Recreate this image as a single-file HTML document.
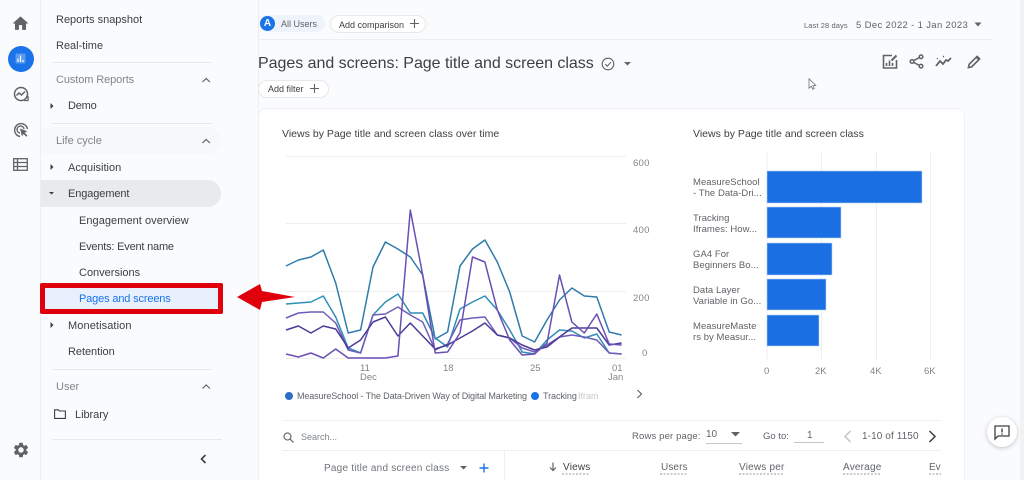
<!DOCTYPE html>
<html><head><meta charset="utf-8">
<style>
html,body{margin:0;padding:0;width:1024px;height:480px;overflow:hidden;background:#fafbfd}
body{position:relative;font-family:"Liberation Sans",sans-serif;color:#3c4043;filter:blur(.35px)}
.t{position:absolute;white-space:nowrap;line-height:14px;font-size:11px;letter-spacing:0}
.g{color:#80868b}
.b{position:absolute}
svg{position:absolute;overflow:visible}
.h{position:absolute;height:1px;background:#e6e8eb}
</style></head><body>

<!-- rail + sidebar -->
<div class="b" style="left:40px;top:0;width:1px;height:480px;background:#eceef1"></div>
<div class="b" style="left:258px;top:0;width:1px;height:480px;background:#eceef1"></div>
<div class="b" style="left:1020px;top:0;width:4px;height:480px;background:#f1f2f4"></div>

<svg style="left:11px;top:14px" width="19" height="19" viewBox="0 0 24 24"><path fill="#5f6368" d="M10 20v-6h4v6h5v-8h3L12 3 2 12h3v8z"/></svg>
<div class="b" style="left:7.500px;top:45.500px;width:26px;height:26px;border-radius:50%;background:#1a73e8"></div>
<svg style="left:15px;top:53px" width="11" height="11" viewBox="0 0 11 11"><rect x=".5" y=".5" width="10" height="10" rx="1" fill="#5b9bef"/><path d="M3 5.500v3.500M5.500 2.500V9M8 7v2" stroke="#fff" stroke-width="1.200"/></svg>
<svg style="left:13px;top:86px" width="16" height="16" viewBox="0 0 16 16" fill="none" stroke="#5f6368" stroke-width="1.500"><circle cx="8" cy="8" r="6.500"/><path d="M3.500 9.500 6 7l2.500 2L12 5.500"/><path d="M11 14.500h4V10" stroke-width="1.300"/></svg>
<svg style="left:13px;top:122px" width="16" height="16" viewBox="0 0 16 16" fill="none" stroke="#5f6368" stroke-width="1.400"><path d="M7 14.500A6.500 6.500 0 1 1 14.500 7"/><path d="M7 11a3.500 3.500 0 1 1 4-4"/><path fill="#5f6368" stroke="none" d="M7 6.500l2 8 1.500-2.500 2.800 2.800 1.200-1.200-2.800-2.800 2.500-1.500z"/></svg>
<svg style="left:13px;top:158px" width="15" height="13" viewBox="0 0 15 13" fill="none" stroke="#5f6368" stroke-width="1.300"><rect x=".7" y=".7" width="13.600" height="11.600"/><path d="M.7 4.500h13.600M.7 8.500h13.600M4.500 .7v11.600"/></svg>
<svg style="left:11.500px;top:441px" width="18" height="18" viewBox="0 0 24 24"><path fill="#5f6368" d="M19.140 12.940c.04-.3.06-.61.06-.94 0-.32-.02-.64-.07-.94l2.030-1.580c.18-.14.23-.41.12-.61l-1.920-3.320c-.12-.22-.37-.29-.59-.22l-2.390.96c-.5-.38-1.030-.7-1.620-.94l-.36-2.540c-.04-.24-.24-.41-.48-.41h-3.840c-.24 0-.43.17-.47.41l-.36 2.540c-.59.24-1.130.57-1.620.94l-2.390-.96c-.22-.08-.47 0-.59.22L2.740 8.870c-.12.21-.08.47.12.61l2.030 1.580c-.05.3-.09.63-.09.94s.02.64.07.94l-2.030 1.580c-.18.14-.23.41-.12.61l1.920 3.320c.12.22.37.29.59.22l2.390-.96c.5.38 1.030.7 1.620.94l.36 2.540c.05.24.24.41.48.41h3.840c.24 0 .44-.17.47-.41l.36-2.540c.59-.24 1.130-.56 1.620-.94l2.390.96c.22.08.47 0 .59-.22l1.920-3.320c.12-.22.07-.47-.12-.61l-2.010-1.580zM12 15.600c-1.980 0-3.600-1.620-3.600-3.600s1.620-3.600 3.600-3.600 3.600 1.620 3.600 3.600-1.620 3.600-3.600 3.600z"/></svg>

<div class="t" style="left:56px;top:13px">Reports snapshot</div>
<div class="t" style="left:56px;top:39px">Real-time</div>
<div class="h" style="left:52px;top:62px;width:160px"></div>
<div class="t g" style="left:56px;top:73px;letter-spacing:-.1px">Custom Reports</div>
<div class="t" style="left:68px;top:99px;letter-spacing:-.2px">Demo</div>
<div class="h" style="left:52px;top:123px;width:160px"></div>
<div class="b" style="left:41px;top:127px;width:180px;height:27px;background:#f7f8fa;border-radius:0 14px 14px 0"></div>
<div class="t g" style="left:56px;top:134px">Life cycle</div>
<div class="t" style="left:68px;top:161px">Acquisition</div>
<div class="b" style="left:41px;top:180px;width:180px;height:27px;background:#e8eaed;border-radius:0 14px 14px 0"></div>
<div class="t" style="left:68px;top:187px;letter-spacing:-.1px">Engagement</div>
<div class="t" style="left:79px;top:214px;letter-spacing:.05px">Engagement overview</div>
<div class="t" style="left:79px;top:240px;letter-spacing:-.2px">Events: Event name</div>
<div class="t" style="left:79px;top:266px">Conversions</div>
<div class="b" style="left:40px;top:283px;width:183px;height:31px;box-sizing:border-box;border:5px solid #e0000b;border-radius:2px;background:#e8f0fe"></div>
<div class="t" style="left:79px;top:292px;color:#1a73e8;letter-spacing:-.15px">Pages and screens</div>
<div class="t" style="left:68px;top:319px;letter-spacing:.1px">Monetisation</div>
<div class="t" style="left:68px;top:345px;letter-spacing:-.05px">Retention</div>
<div class="h" style="left:52px;top:369px;width:160px"></div>
<div class="t g" style="left:56px;top:380px">User</div>
<div class="t" style="left:75px;top:408px;letter-spacing:-.05px">Library</div>
<div class="h" style="left:52px;top:439px;width:170px"></div>
<svg style="left:54px;top:409px" width="12" height="10" viewBox="0 0 12 10" fill="none" stroke="#3c4043" stroke-width="1.100"><path d="M.6.8h3.800l1 1.200h6v7.400H.6z"/></svg>

<!-- carets -->
<svg style="left:0;top:0" width="258" height="480" fill="#3c4043">
<path d="M50.500 103l3 3-3 3zM50.500 164l3 3-3 3zM50.500 322l3 3-3 3zM49 192h5l-2.500 2.500z"/>
<g fill="none" stroke="#5f6368" stroke-width="1.200"><path d="M202.500 82l3.700-3.500 3.700 3.500M202.500 143l3.700-3.500 3.700 3.500M202.500 388.500l3.700-3.500 3.700 3.500"/></g>
<path d="M205.500 455l-4 4 4 4" fill="none" stroke="#3c4043" stroke-width="1.600"/>
</svg>

<!-- top bar -->
<div class="b" style="left:259px;top:15px;width:66px;height:17px;background:#eef3fc;border-radius:9px"></div>
<div class="b" style="left:260px;top:16px;width:15px;height:15px;border-radius:50%;background:#1a73e8;color:#fff;font-size:10px;font-weight:bold;line-height:15px;text-align:center">A</div>
<div class="t" style="left:281px;top:17px;font-size:9px;color:#5f6368">All Users</div>
<div class="b" style="left:330px;top:15px;width:94px;height:16px;border:1px solid #e6e8eb;border-radius:9px;background:#fff"></div>
<div class="t" style="left:339px;top:18px;font-size:9px">Add comparison</div>
<svg style="left:409px;top:18px" width="11" height="11" fill="none" stroke="#5f6368" stroke-width="1.100"><path d="M5.500 1v9M1 5.500h9"/></svg>
<div class="t" style="left:804px;top:19px;font-size:7.500px;letter-spacing:.1px;color:#5f6368">Last 28 days</div>
<div class="t" style="left:856px;top:19px;font-size:9.500px;letter-spacing:.35px;color:#5f6368">5 Dec 2022 - 1 Jan 2023</div>
<svg style="left:974px;top:22px" width="8" height="5"><path d="M.5.500h7L4 4.500z" fill="#5f6368"/></svg>
<div class="h" style="left:258px;top:39px;width:735px;background:#eceef1"></div>

<div class="t" style="left:258px;top:54px;line-height:20px;font-size:16px;letter-spacing:-.03px;color:#3c4043">Pages and screens: Page title and screen class</div>
<svg style="left:601px;top:57px" width="14" height="14" fill="none" stroke="#5f6368" stroke-width="1.100"><circle cx="7" cy="7" r="5.800"/><path d="M4.300 7.200l2 2 3.600-3.900"/></svg>
<svg style="left:624px;top:62px" width="7" height="4"><path d="M0 0h7L3.500 3.500z" fill="#5f6368"/></svg>
<div class="b" style="left:258px;top:80px;width:69px;height:16px;border:1px solid #e6e8eb;border-radius:9px;background:#fff"></div>
<div class="t" style="left:268px;top:82px;font-size:9px">Add filter</div>
<svg style="left:309px;top:83px" width="11" height="11" fill="none" stroke="#5f6368" stroke-width="1.100"><path d="M5.500 1v9M1 5.500h9"/></svg>

<svg style="left:882px;top:54px" width="16" height="15" fill="none" stroke="#5f6368" stroke-width="1.600"><path d="M10 1.500H1.500v12.500h13V6"/><path d="M4.500 12V9M7.500 12V6.500M10.500 12V9"/><path d="M9.500 6.500l5-5" stroke-width="2"/></svg>
<svg style="left:909px;top:54px" width="15" height="15" fill="none" stroke="#5f6368" stroke-width="1.500"><circle cx="12" cy="2.800" r="1.800"/><circle cx="3" cy="7.500" r="1.800"/><circle cx="12" cy="12.200" r="1.800"/><path d="M4.500 6.700l6-3.200M4.500 8.300l6 3.200"/></svg>
<svg style="left:935px;top:55px" width="17" height="13" fill="none" stroke="#5f6368" stroke-width="1.800"><path d="M1 11l4-5 3 3 3-4 2 1 3-3"/><path d="M2 4l.8-.8M8 2l1-1" stroke-width="1.300"/></svg>
<svg style="left:967px;top:54px" width="15" height="15" viewBox="0 0 16 16" fill="none" stroke="#5f6368" stroke-width="1.700"><path d="M1.500 14.500l.8-3.500 8.500-8.500 2.700 2.700-8.500 8.500z"/><path d="M10 3.500l2.700 2.700"/></svg>
<svg style="left:808px;top:78px" width="9" height="13" fill="#fff" stroke="#6b7075" stroke-width=".8"><path d="M1 .8v9.500l2.300-2 1.500 3 1.500-.7-1.500-2.900 3-.3z"/></svg>

<!-- card -->
<div class="b" style="left:258px;top:108px;width:707px;height:380px;background:#fff;border:1px solid #eef0f3;border-radius:8px;box-sizing:border-box"></div>

<div class="t" style="left:282px;top:127px;font-size:10.500px;letter-spacing:.02px">Views by Page title and screen class over time</div>
<div class="t" style="left:693px;top:127px;font-size:10.500px;letter-spacing:.02px">Views by Page title and screen class</div>

<!-- line chart -->
<svg style="left:0;top:0" width="1024" height="480" fill="none">
<g stroke="#eceef0" stroke-width="1"><path d="M286 156.500h340M286 223.500h340M286 291.500h340M286 358.500h340"/></g>
<g stroke-width="1.500" stroke-linejoin="round">
<polyline stroke="#2f7bab" points="286,266 298.400,260 310.900,257 323.300,250 335.700,283 348.200,333 360.600,330 373,267 385.400,242 397.900,249 410.300,257 422.700,275 435.200,339 447.600,332 460,266 472.500,249 484.900,240 497.300,262 509.700,292 522.200,336 534.600,342 547,320 559.500,300 571.900,288 584.300,296 596.800,297 609.200,332 621.600,335"/>
<polyline stroke="#2f8fb5" points="286,304 298.400,303 310.900,302 323.300,296 335.700,317 348.200,348 360.600,353 373,315 385.400,302 397.900,294 410.300,313 422.700,313 435.200,338 447.600,347 460,309 472.500,302 484.900,296 497.300,310 509.700,330 522.200,352 534.600,354 547,340 559.500,330 571.900,331 584.300,338 596.800,334 609.200,353 621.600,354"/>
<polyline stroke="#6f5cb8" points="286,318 298.400,313 310.900,312 323.300,312 335.700,323 348.200,350 360.600,353 373,315 385.400,314 397.900,307 410.300,315 422.700,322 435.200,350 447.600,344 460,320 472.500,318 484.900,317 497.300,335 509.700,338 522.200,348 534.600,352 547,345 559.500,337 571.900,335 584.300,337 596.800,340 609.200,353 621.600,354"/>
<polyline stroke="#4b3b98" points="286,330 298.400,326 310.900,333 323.300,326 335.700,329 348.200,348 360.600,340 373,322 385.400,317 397.900,336 410.300,323 422.700,336 435.200,349 447.600,345 460,338 472.500,331 484.900,323 497.300,335 509.700,338 522.200,345 534.600,350 547,347 559.500,337 571.900,328 584.300,328 596.800,328 609.200,345 621.600,343"/>
<polyline stroke="#6a4fb5" points="286,354 298.400,357 310.900,353 323.300,358 335.700,349 348.200,358 360.600,358 373,358 385.400,358 397.900,356 410.300,210 422.700,275 435.200,353 447.600,352 460,333 472.500,257 484.900,262 497.300,310 509.700,340 522.200,355 534.600,354 547,343 559.500,275 571.900,322 584.300,333 596.800,314 609.200,344 621.600,345"/>
</g>
</svg>
<div class="t g" style="left:633px;top:157px;font-size:9.500px;letter-spacing:.25px">600</div>
<div class="t g" style="left:633px;top:224px;font-size:9.500px;letter-spacing:.25px">400</div>
<div class="t g" style="left:633px;top:292px;font-size:9.500px;letter-spacing:.25px">200</div>
<div class="t g" style="left:642px;top:347px;font-size:9.500px">0</div>
<div class="t g" style="left:360px;top:362px;font-size:9.500px">11</div>
<div class="t g" style="left:360px;top:371px;font-size:9.500px">Dec</div>
<div class="t g" style="left:443px;top:362px;font-size:9.500px">18</div>
<div class="t g" style="left:530px;top:362px;font-size:9.500px">25</div>
<div class="t g" style="left:612px;top:362px;font-size:9.500px">01</div>
<div class="t g" style="left:608px;top:371px;font-size:9.500px">Jan</div>

<!-- legend -->
<div class="b" style="left:285px;top:392px;width:8px;height:8px;border-radius:50%;background:#2b6fc4"></div>
<div class="t" style="left:297px;top:389px;font-size:9px;letter-spacing:-.11px;color:#5f6368">MeasureSchool - The Data-Driven Way of Digital Marketing</div>
<div class="b" style="left:531px;top:392px;width:8px;height:8px;border-radius:50%;background:#1a73e8"></div>
<div class="t" style="left:543px;top:389px;font-size:9px;letter-spacing:-.05px;color:#5f6368">Tracking</div>
<div class="t" style="left:578px;top:389px;font-size:9px;color:#c4c7cb">Ifram</div>
<svg style="left:636px;top:389px" width="7" height="10" fill="none" stroke="#5f6368" stroke-width="1.200"><path d="M1.500 1l4 4-4 4"/></svg>

<!-- bar chart -->
<svg style="left:0;top:0" width="1024" height="480">
<g stroke="#eceef0"><path d="M767 152v208M821.500 152v208M876.500 152v208M930.500 152v208"/></g>
<g fill="#1a6fe3" stroke="#b7d3f7" stroke-width=".6"><rect x="767" y="171" width="155" height="32"/><rect x="767" y="207" width="74" height="31"/><rect x="767" y="243" width="65" height="32"/><rect x="767" y="279" width="59" height="31"/><rect x="767" y="315" width="52" height="31"/></g>
</svg>
<div class="t" style="left:693px;top:178px;font-size:9.500px;line-height:10.500px;letter-spacing:.05px;white-space:pre;color:#5f6368">MeasureSchool
- The Data-Dri...</div>
<div class="t" style="left:693px;top:214px;font-size:9.500px;line-height:10.500px;letter-spacing:.05px;white-space:pre;color:#5f6368">Tracking
Iframes: How...</div>
<div class="t" style="left:693px;top:250px;font-size:9.500px;line-height:10.500px;letter-spacing:.05px;white-space:pre;color:#5f6368">GA4 For
Beginners Bo...</div>
<div class="t" style="left:693px;top:286px;font-size:9.500px;line-height:10.500px;letter-spacing:.05px;white-space:pre;color:#5f6368">Data Layer
Variable in Go...</div>
<div class="t" style="left:693px;top:322px;font-size:9.500px;line-height:10.500px;letter-spacing:.05px;white-space:pre;color:#5f6368">MeasureMaste
rs by Measur...</div>
<div class="t g" style="left:764px;top:365px;font-size:9.500px">0</div>
<div class="t g" style="left:815px;top:365px;font-size:9.500px">2K</div>
<div class="t g" style="left:870px;top:365px;font-size:9.500px">4K</div>
<div class="t g" style="left:924px;top:365px;font-size:9.500px">6K</div>

<!-- table -->
<div class="h" style="left:282px;top:420px;width:660px;background:#f1f2f4"></div>
<svg style="left:283px;top:432px" width="11" height="11" fill="none" stroke="#70757a" stroke-width="1.300"><circle cx="4.500" cy="4.500" r="3.500"/><path d="M7 7l3.500 3.500"/></svg>
<div class="t g" style="left:301px;top:430px;font-size:9px">Search...</div>
<div class="t" style="left:632px;top:430px;font-size:9.500px;letter-spacing:.15px;color:#5f6368">Rows per page:</div>
<div class="t" style="left:706px;top:428px;font-size:10px;color:#5f6368">10</div>
<svg style="left:731px;top:432px" width="9" height="5"><path d="M0 0h9L4.500 4.500z" fill="#5f6368"/></svg>
<div class="h" style="left:706px;top:443px;width:36px;background:#c4c7cb"></div>
<div class="t" style="left:763px;top:430px;font-size:9.500px;color:#5f6368">Go to:</div>
<div class="t" style="left:807px;top:429px;font-size:10px;color:#5f6368">1</div>
<div class="h" style="left:794px;top:442px;width:30px;background:#c4c7cb"></div>
<svg style="left:843px;top:430px" width="9" height="13" fill="none" stroke="#bdc1c6" stroke-width="1.400"><path d="M7.500 1L2 6.500 7.500 12"/></svg>
<div class="t" style="left:862px;top:430px;font-size:10px;letter-spacing:.1px;color:#5f6368">1-10 of 1150</div>
<svg style="left:928px;top:430px" width="9" height="13" fill="none" stroke="#3c4043" stroke-width="1.500"><path d="M1.500 1L7 6.500 1.500 12"/></svg>
<div class="h" style="left:282px;top:450px;width:659px;background:#eceef0"></div>
<div class="b" style="left:504px;top:451px;width:1px;height:29px;background:#eceef0"></div>
<div class="t g" style="left:324px;top:462px;font-size:10px;letter-spacing:.22px;color:#70757a">Page title and screen class</div>
<svg style="left:460px;top:466px" width="7" height="4"><path d="M0 0h7L3.500 3.500z" fill="#5f6368"/></svg>
<svg style="left:479px;top:463px" width="10" height="10" fill="none" stroke="#1a73e8" stroke-width="1.400"><path d="M5 .5v9M.5 5h9"/></svg>
<svg style="left:549px;top:462px" width="8" height="10" fill="none" stroke="#5f6368" stroke-width="1.200"><path d="M4 .5v8M1 5.500l3 3 3-3"/></svg>
<div class="t" style="left:563px;top:461px;font-size:10px;letter-spacing:.2px">Views</div>
<div class="t g" style="left:661px;top:461px;font-size:10px;letter-spacing:.1px;color:#5f6368">Users</div>
<div class="t g" style="left:739px;top:461px;font-size:10px;letter-spacing:.2px;color:#5f6368">Views per</div>
<div class="t g" style="left:843px;top:461px;font-size:10px;letter-spacing:.2px;color:#5f6368">Average</div>
<div class="t g" style="left:929px;top:461px;width:12px;overflow:hidden;font-size:10px;color:#5f6368">Event</div>
<svg style="left:0;top:0" width="1024" height="480" fill="none" stroke="#70757a" stroke-dasharray="2 1.500" stroke-width=".8"><path d="M562 474h28M660 474h27M739 474h45M843 474h38M929 474h12"/></svg>

<!-- feedback -->
<div class="b" style="left:986.500px;top:417px;width:30px;height:30px;border-radius:50%;background:#fff;box-shadow:0 1px 4px rgba(60,64,67,.3)"></div>
<svg style="left:993.500px;top:425px" width="16" height="15" fill="none" stroke="#3c4043" stroke-width="1.300"><path d="M1 1h14v10H4l-3 3z"/><path d="M8 3.500v4M8 8.500v1.300" stroke-width="1.400"/></svg>

<!-- red arrow (on top of card) -->
<svg style="left:0;top:0" width="300" height="480"><polygon points="237,297 260,284 262,291 295,297 262,302 260,310" fill="#e0000b"/></svg>
</body></html>
